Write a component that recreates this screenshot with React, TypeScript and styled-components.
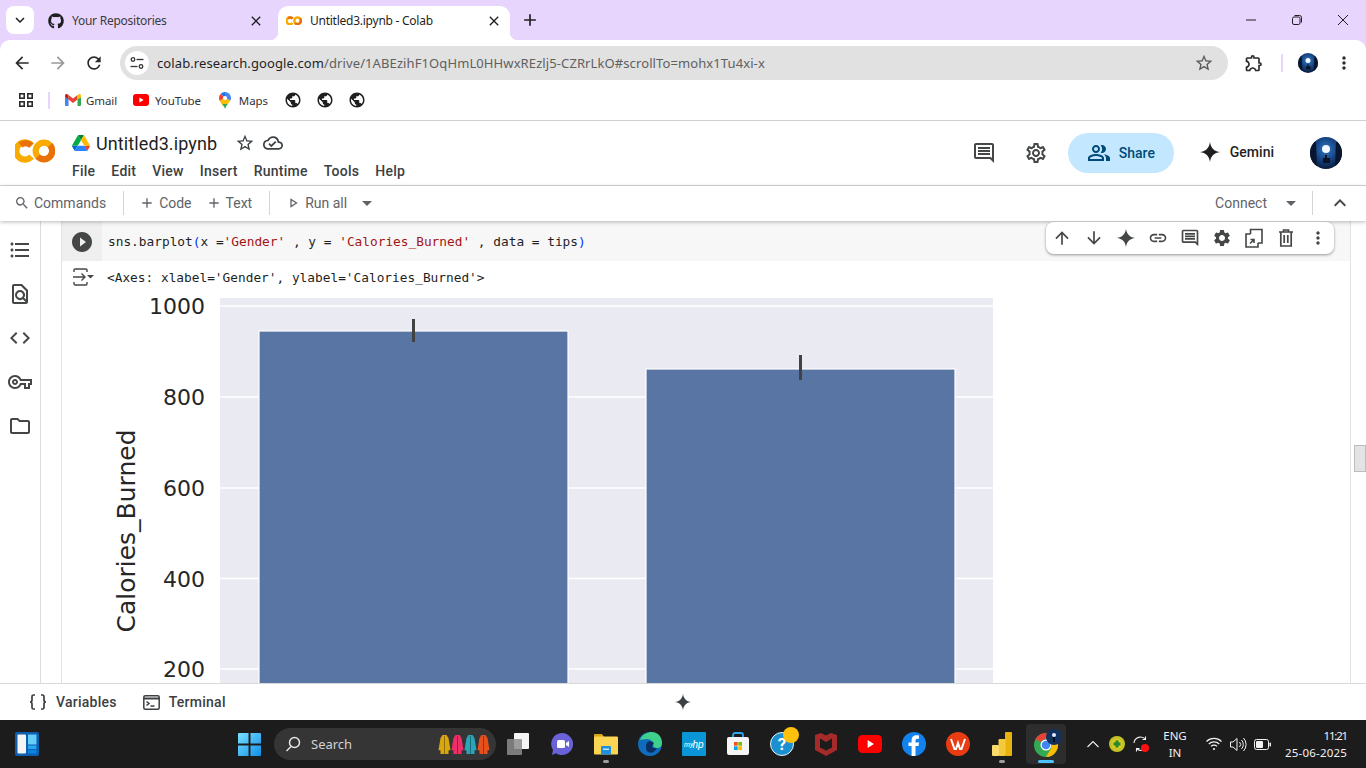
import React, { ReactElement } from "react";
import styled, { createGlobalStyle } from "styled-components";
import { FaGithub } from "react-icons/fa";
import {
    MdAdd,
    MdArrowBack,
    MdArrowDownward,
    MdArrowDropDown,
    MdArrowForward,
    MdArrowUpward,
    MdClose,
    MdCode,
    MdExpandLess,
    MdExpandMore,
    MdFormatListBulleted,
    MdLink,
    MdMoreVert,
    MdOutlineCloudDone,
    MdOutlineComment,
    MdOutlineExtension,
    MdOutlineFindInPage,
    MdOutlineFolder,
    MdOutlinePeopleAlt,
    MdOutlineSettings,
    MdOutlineVpnKey,
    MdPlayCircleFilled,
    MdPublic,
    MdRefresh,
    MdSearch,
    MdSettings,
    MdStarBorder,
} from "react-icons/md";

const GlobalStyle = createGlobalStyle`
    html, body {
        margin: 0;
        padding: 0;
        width: 1366px;
        height: 768px;
        overflow: hidden;
        background: #ffffff;
        font-family: "Noto Sans", sans-serif;
    }
    * {
        box-sizing: border-box;
    }
`;

const UI_FONT = `"Noto Sans", "Open Sans", sans-serif`;
const COLAB_FONT = `Roboto, "Noto Sans", sans-serif`;
const MONO_FONT = `"DejaVu Sans Mono", "Liberation Mono", monospace`;

const Page = styled.div`
    width: 1366px;
    height: 768px;
    display: flex;
    flex-direction: column;
    overflow: hidden;
`;

/* browser chrome */
const BrowserTop = styled.div`
    background: #e8d5fd;
    flex: 0 0 auto;
`;

const TabStrip = styled.div`
    height: 40px;
    padding: 6px 0 0 6px;
    display: flex;
    align-items: flex-start;
`;

const TabListButton = styled.div`
    width: 28px;
    height: 28px;
    margin-right: 6px;
    background: #ffffff;
    border-radius: 8px;
    display: flex;
    align-items: center;
    justify-content: center;
    color: #1f1f1f;
    font-size: 18px;
`;

const Tab = styled.div<{ $active?: boolean }>`
    position: relative;
    width: 232px;
    margin-right: ${(p) => (p.$active ? "0" : "6px")};
    height: 34px;
    padding: 0 8px;
    padding-bottom: 5px;
    display: flex;
    align-items: center;
    gap: 8px;
    font-family: ${UI_FONT};
    font-size: 12px;
    letter-spacing: -0.25px;
    color: #3b3b3b;
    background: ${(p) => (p.$active ? "#ffffff" : "transparent")};
    border-radius: 10px 10px 0 0;
    & > svg {
        flex: 0 0 16px;
    }
    ${(p) =>
        p.$active &&
        `
        color: #1f1f1f;
        &::before, &::after {
            content: "";
            position: absolute;
            bottom: 0;
            width: 8px;
            height: 8px;
        }
        &::before {
            left: -8px;
            background: radial-gradient(circle at 0 0, transparent 8px, #ffffff 8.5px);
        }
        &::after {
            right: -8px;
            background: radial-gradient(circle at 100% 0, transparent 8px, #ffffff 8.5px);
        }
    `}
`;

const TabTitle = styled.span`
    flex: 1;
    white-space: nowrap;
`;

const TabClose = styled.span`
    width: 16px;
    height: 16px;
    display: flex;
    align-items: center;
    justify-content: center;
    font-size: 16px;
    color: #1f1f1f;
`;

const NewTab = styled.div`
    width: 24px;
    height: 28px;
    margin-left: 8px;
    display: flex;
    align-items: center;
    justify-content: center;
    font-size: 20px;
    color: #1f1f1f;
`;

const WindowControls = styled.div`
    margin-left: auto;
    margin-top: -6px;
    display: flex;
`;

const WindowButton = styled.div`
    width: 46px;
    height: 40px;
    display: flex;
    align-items: center;
    justify-content: center;
`;

const AddressRow = styled.div`
    height: 44px;
    background: #ffffff;
    border-radius: 10px 10px 0 0;
    padding: 2px 0 0 4px;
    display: flex;
    align-items: center;
`;

const NavButton = styled.div<{ $dim?: boolean; $w?: number; $ml?: number }>`
    width: ${(p) => p.$w ?? 36}px;
    margin-left: ${(p) => p.$ml ?? 0}px;
    height: 34px;
    display: flex;
    align-items: center;
    justify-content: center;
    font-size: 20px;
    color: ${(p) => (p.$dim ? "#9a9a9a" : "#2b2b2b")};
`;

const Omnibox = styled.div`
    width: 1108px;
    height: 34px;
    margin-left: 8px;
    margin-right: 8px;
    padding: 0 14px 0 5px;
    border-radius: 17px;
    background: #e1e1e1;
    display: flex;
    align-items: center;
`;

const SiteChip = styled.div`
    width: 24px;
    height: 24px;
    border-radius: 50%;
    background: #ffffff;
    display: flex;
    align-items: center;
    justify-content: center;
    margin-right: 8px;
`;

const UrlText = styled.div`
    flex: 1;
    font-family: ${UI_FONT};
    font-size: 13px;
    letter-spacing: 0.1px;
    color: #5f6060;
    white-space: nowrap;
    & b {
        font-weight: 400;
        color: #1f1f1f;
    }
`;

const StarSlot = styled.div`
    width: 20px;
    display: flex;
    justify-content: center;
    font-size: 20px;
    color: #5a5a5a;
`;

const AddressSep = styled.div`
    width: 2px;
    height: 18px;
    margin: 0 15px 0 9px;
    background: #e8d5fd;
`;

const BookmarksRow = styled.div`
    height: 37px;
    background: #ffffff;
    border-bottom: 1px solid #cfcfcf;
    padding: 0 0 4px 18px;
    display: flex;
    align-items: center;
    font-family: ${UI_FONT};
    font-size: 11.5px;
    letter-spacing: -0.1px;
    color: #333;
`;

const BookmarkSep = styled.div`
    width: 2px;
    height: 17px;
    margin: 0 15px 0 14px;
    background: #e8d5fd;
`;

const Bookmark = styled.div<{ $gap?: number; $mr?: number }>`
    display: flex;
    align-items: center;
    gap: ${(p) => p.$gap ?? 6}px;
    margin-right: ${(p) => p.$mr ?? 16}px;
    white-space: nowrap;
`;

const GlobeRow = styled.div`
    display: flex;
    gap: 14px;
    margin-left: 0;
    font-size: 18px;
    color: #1f1f1f;
`;

/* colab header */
const ColabHeader = styled.div`
    height: 65px;
    flex: 0 0 auto;
    border-bottom: 1px solid #d9d9d9;
    padding: 0 24px 0 15px;
    display: flex;
    font-family: ${COLAB_FONT};
    background: #ffffff;
`;

const LogoSlot = styled.div`
    width: 57px;
    display: flex;
    align-items: center;
    padding-bottom: 4px;
`;

const TitleColumn = styled.div`
    display: flex;
    flex-direction: column;
`;

const TitleRow = styled.div`
    display: flex;
    align-items: center;
    height: 22px;
    margin-top: 11px;
    color: #3c4043;
`;

const NotebookName = styled.span`
    margin: 0 18px 0 6px;
    font-size: 18px;
    color: #1f1f1f;
    letter-spacing: 0.1px;
`;

const CloudSlot = styled.span`
    display: flex;
    margin-left: 8px;
`;

const MenuRow = styled.div`
    display: flex;
    gap: 16px;
    margin-top: 9px;
    font-size: 14px;
    font-weight: 500;
    letter-spacing: 0.25px;
    color: #3c4043;
`;

const HeaderActions = styled.div`
    margin-left: auto;
    display: flex;
    align-items: center;
`;

const HeaderIcon = styled.div`
    width: 52px;
    display: flex;
    justify-content: center;
    font-size: 24px;
    color: #444746;
`;

const ShareButton = styled.div`
    width: 106px;
    height: 40px;
    margin-left: 6px;
    border-radius: 20px;
    background: #c2e7ff;
    color: #004a77;
    font-size: 14px;
    font-weight: 500;
    display: flex;
    align-items: center;
    justify-content: center;
    gap: 8px;
`;

const GeminiButton = styled.div`
    margin-left: 25px;
    padding-bottom: 2px;
    display: flex;
    align-items: center;
    gap: 9px;
    font-size: 14px;
    font-weight: 500;
    color: #1f1f1f;
`;

const AvatarSlot = styled.div`
    margin-left: 36px;
    display: flex;
`;

const AvatarSvg = styled.svg`
    display: block;
    border-radius: 50%;
`;

/* notebook toolbar */
const NotebookBar = styled.div`
    position: relative;
    z-index: 2;
    height: 35px;
    flex: 0 0 auto;
    padding: 0 0 2px 14px;
    display: flex;
    align-items: center;
    background: #ffffff;
    box-shadow: 0 1px 4px rgba(0, 0, 0, 0.28);
    font-family: ${COLAB_FONT};
    font-size: 14px;
    color: #5f6368;
`;

const BarItem = styled.div<{ $gap?: number; $ml?: number }>`
    display: flex;
    align-items: center;
    gap: ${(p) => p.$gap ?? 4}px;
    margin-left: ${(p) => p.$ml ?? 0}px;
    white-space: nowrap;
    font-size: 14px;
    & svg {
        font-size: 16px;
    }
`;

const BarSep = styled.div<{ $ml: number; $mr: number }>`
    width: 1px;
    height: 24px;
    background: #d5d5d5;
    margin-left: ${(p) => p.$ml}px;
    margin-right: ${(p) => p.$mr}px;
`;

const BarCaret = styled.span<{ $ml: number; $mr?: number }>`
    display: flex;
    margin-left: ${(p) => p.$ml}px;
    margin-right: ${(p) => p.$mr ?? 0}px;
    font-size: 24px;
`;

const BarChevron = styled.span`
    display: flex;
    margin-right: 14px;
    font-size: 24px;
    color: #444746;
`;

const BarRight = styled.div`
    margin-left: auto;
    display: flex;
    align-items: center;
`;

/* notebook body */
const Main = styled.div`
    position: relative;
    height: 462px;
    flex: 0 0 auto;
    display: flex;
    background: #ffffff;
`;

const Sidebar = styled.div`
    width: 41px;
    padding-top: 17px;
    border-right: 1px solid #dadce0;
    display: flex;
    flex-direction: column;
    align-items: center;
    gap: 20px;
    font-size: 24px;
    color: #444746;
    & svg {
        display: block;
    }
`;

const Gutter = styled.div`
    width: 20px;
`;

const Cell = styled.div`
    width: 1290px;
    border-left: 1px solid #e3e3e3;
    border-right: 1px solid #e3e3e3;
    overflow: hidden;
`;

const CellHead = styled.div`
    height: 40px;
    display: flex;
    background: #f7f7f7;
`;

const RunSlot = styled.div`
    width: 40px;
    padding-top: 1px;
    background: #efefef;
    display: flex;
    align-items: center;
    justify-content: center;
    font-size: 24px;
    color: #444746;
`;

const CodeLine = styled.div`
    padding: 0 0 0 6px;
    line-height: 41px;
    font-family: ${MONO_FONT};
    font-size: 12.8px;
    color: #1f1f1f;
    white-space: pre;
`;

const Str = styled.span`
    color: #a31515;
`;

const Paren = styled.span`
    color: #0431fa;
`;

const OutputRow = styled.div`
    height: 29px;
    padding: 3px 0 0 10px;
    display: flex;
    align-items: center;
    font-family: ${MONO_FONT};
    font-size: 12.8px;
    color: #1f1f1f;
    white-space: pre;
    & svg {
        margin-right: 13px;
    }
`;

const ChartSvg = styled.svg`
    display: block;
    margin-left: 38px;
    font-family: "DejaVu Sans", sans-serif;
`;

const ScrollTrack = styled.div`
    width: 15px;
    padding: 224px 0 0 3px;
`;

const ScrollThumb = styled.div`
    height: 27px;
    background: #e3e3e3;
    border: 1px solid #bdbdbd;
`;

const CellToolbar = styled.div`
    position: absolute;
    top: 1px;
    left: 1046px;
    width: 288px;
    height: 32px;
    z-index: 3;
    display: flex;
    background: #ffffff;
    border-radius: 8px;
    box-shadow: 0 1px 3px rgba(0, 0, 0, 0.4);
`;

const CellTool = styled.div`
    width: 32px;
    display: flex;
    align-items: center;
    justify-content: center;
    font-size: 20px;
    color: #444746;
`;

/* bottom bar */
const BottomBar = styled.div`
    height: 37px;
    flex: 0 0 auto;
    border-top: 1px solid #d9d9d9;
    padding-left: 29px;
    display: flex;
    align-items: center;
    font-family: ${COLAB_FONT};
    font-size: 14px;
    font-weight: 500;
    letter-spacing: 0.25px;
    color: #3c4043;
    background: #ffffff;
`;

const BottomItem = styled.div`
    display: flex;
    align-items: center;
    gap: 9px;
    margin-right: 26px;
`;

const BottomGemini = styled.div`
    margin-left: 422px;
    display: flex;
`;

/* windows taskbar */
const Taskbar = styled.div`
    height: 48px;
    flex: 0 0 auto;
    background: #1c1c1c;
    display: flex;
    align-items: center;
    color: #ffffff;
    font-family: ${UI_FONT};
`;

const TaskSlot = styled.div<{ $w?: number; $active?: boolean; $ml?: number; $mr?: number }>`
    position: relative;
    width: ${(p) => p.$w ?? 44}px;
    height: 40px;
    margin-left: ${(p) => p.$ml ?? 0}px;
    margin-right: ${(p) => p.$mr ?? 0}px;
    flex: 0 0 auto;
    display: flex;
    align-items: center;
    justify-content: center;
    border-radius: 4px;
    background: ${(p) => (p.$active ? "#2d2d2d" : "transparent")};
`;

const RunningDot = styled.span<{ $active?: boolean }>`
    position: absolute;
    bottom: 1px;
    left: 50%;
    transform: translateX(-50%);
    width: ${(p) => (p.$active ? "16px" : "6px")};
    height: 3px;
    border-radius: 2px;
    background: ${(p) => (p.$active ? "#4cc2ff" : "#9d9d9d")};
`;

const WidgetSlot = styled.div`
    margin-left: 5px;
    margin-right: 178px;
`;

const SearchBox = styled.div`
    width: 222px;
    height: 32px;
    margin-left: 3px;
    padding: 0 6px 0 11px;
    border-radius: 16px;
    background: #353535;
    display: flex;
    align-items: center;
    gap: 10px;
    font-size: 13px;
    color: #d2d2d2;
`;

const SearchArt = styled.div`
    margin-left: auto;
    display: flex;
`;

const TrayLabel = styled.div`
    font-size: 11.5px;
    line-height: 17px;
    text-align: center;
    color: #f2f2f2;
`;

const Clock = styled.div`
    margin-left: auto;
    padding-right: 19px;
    font-size: 11.5px;
    line-height: 17px;
    letter-spacing: 0.2px;
    text-align: right;
    color: #f2f2f2;
`;

const ClockTime = styled.div`
    letter-spacing: -1.2px;
`;

const ColabLogo = ({ w }: { w: number }): ReactElement => (
    <svg width={w} height={(w * 24) / 40} viewBox="0 0 40 24">
        <path d="M16.5 6.5 A8.6 8.6 0 1 0 16.5 17.5" fill="none" stroke="#f9ab00" strokeWidth="6.2" />
        <path d="M5.5 6 A8.6 8.6 0 0 1 16.5 6.5" fill="none" stroke="#e8710a" strokeWidth="6.2" />
        <circle cx="29" cy="12" r="8.3" fill="none" stroke="#f9ab00" strokeWidth="6.2" />
        <path d="M35 6.2 A8.3 8.3 0 0 1 22.7 17.5" fill="none" stroke="#e8710a" strokeWidth="6.2" />
    </svg>
);

const DriveLogo = (): ReactElement => (
    <svg width="18" height="16" viewBox="0 0 87.3 78">
        <path d="m6.6 66.85 3.85 6.65c.8 1.4 1.95 2.5 3.3 3.3l13.75-23.8h-27.5c0 1.55.4 3.1 1.2 4.5z" fill="#0066da" />
        <path d="m43.65 25-13.75-23.8c-1.35.8-2.5 1.9-3.3 3.3l-25.4 44a9.06 9.06 0 0 0 -1.2 4.5h27.5z" fill="#00ac47" />
        <path d="m73.55 76.8c1.35-.8 2.5-1.9 3.3-3.3l1.6-2.75 7.65-13.25c.8-1.4 1.2-2.95 1.2-4.5h-27.502l5.852 11.5z" fill="#ea4335" />
        <path d="m43.65 25 13.75-23.8c-1.35-.8-2.9-1.2-4.5-1.2h-18.5c-1.6 0-3.15.45-4.5 1.2z" fill="#00832d" />
        <path d="m59.8 53h-32.3l-13.75 23.8c1.35.8 2.9 1.2 4.5 1.2h50.8c1.6 0 3.15-.45 4.5-1.2z" fill="#2684fc" />
        <path d="m73.4 26.5-12.7-22c-.8-1.4-1.95-2.5-3.3-3.3l-13.75 23.8 16.15 28h27.45c0-1.55-.4-3.1-1.2-4.5z" fill="#ffba00" />
    </svg>
);

const Sparkle = ({ size, color }: { size: number; color: string }): ReactElement => (
    <svg width={size} height={size} viewBox="0 0 24 24">
        <path d="M12 1C12.8 7.5 16.5 11.2 23 12C16.5 12.8 12.8 16.5 12 23C11.2 16.5 7.5 12.8 1 12C7.5 11.2 11.2 7.5 12 1Z" fill={color} />
    </svg>
);

const Avatar = ({ size, id }: { size: number; id: string }): ReactElement => (
    <AvatarSvg width={size} height={size} viewBox="0 0 32 32">
        <defs>
            <radialGradient id={id} cx="50%" cy="38%" r="62%">
                <stop offset="0" stopColor="#2f78c4" />
                <stop offset="0.6" stopColor="#15407f" />
                <stop offset="1" stopColor="#0a1a3a" />
            </radialGradient>
        </defs>
        <rect width="32" height="32" fill={`url(#${id})`} />
        <circle cx="16" cy="12" r="4" fill="#f4f8ff" />
        <path d="M13 26v-5h2v-3h2v3h3v5z" fill="#0b1220" />
        <path d="M0 4l6 1 1 24-7 3zM32 4l-6 1-1 24 7 3z" fill="#0a1630" />
    </AvatarSvg>
);

const SiteTune = (): ReactElement => (
    <svg width="14" height="14" viewBox="0 0 14 14" fill="none" stroke="#333" strokeWidth="1.300">
        <circle cx="3" cy="3.500" r="1.800" />
        <path d="M6.500 3.500H13.500" />
        <circle cx="11" cy="10.500" r="1.800" />
        <path d="M.5 10.500H7.500" />
    </svg>
);

const GmailIcon = (): ReactElement => (
    <svg width="16" height="12" viewBox="0 0 16 12">
        <path d="M0 3v8a1 1 0 0 0 1 1h2.500V5z" fill="#4285f4" />
        <path d="M16 3v8a1 1 0 0 1-1 1h-2.500V5z" fill="#34a853" />
        <path d="M3.500 5.500L8 9l4.500-3.500V1L8 4.400 3.500 1z" fill="#ea4335" />
        <path d="M0 3l3.500 2.600V1L2.200.2C1.200-.4 0 .3 0 1.600z" fill="#c5221f" />
        <path d="M16 3l-3.500 2.600V1l1.300-.8c1-.6 2.200.1 2.200 1.400z" fill="#fbbc04" />
    </svg>
);

const YoutubeIcon = ({ w }: { w: number }): ReactElement => (
    <svg width={w} height={(w * 12) / 16} viewBox="0 0 16 12">
        <rect width="16" height="12" rx="3" fill="#ff0000" />
        <path d="M6.400 3.400v5.200L10.600 6z" fill="#ffffff" />
    </svg>
);

const MapsIcon = (): ReactElement => (
    <svg width="12" height="17" viewBox="0 0 12 17">
        <path d="M6 0a6 6 0 0 1 6 6c0 1-.3 2-.7 2.700L6 5.500z" fill="#4285f4" />
        <path d="M6 0a6 6 0 0 0-4.400 1.900L6 5.500z" fill="#1a73e8" />
        <path d="M1.600 1.900A6 6 0 0 0 0 6c0 1 .3 2 .8 2.900L6 5.500z" fill="#ea4335" />
        <path d="M.8 8.900L6 5.500l5.300 3.200L8 13l-4.500.2z" fill="#fbbc04" />
        <path d="M3.500 12.600C4.600 14 5.600 15.500 6 17c.4-1.500 1.300-3 2.400-4.400L8.500 12 3.500 12z" fill="#34a853" />
        <circle cx="6" cy="6" r="2.100" fill="#ffffff" />
    </svg>
);

const Minimize = (): ReactElement => (
    <svg width="12" height="12" viewBox="0 0 12 12">
        <path d="M1 6h10" stroke="#1f1f1f" strokeWidth="1" />
    </svg>
);

const Restore = (): ReactElement => (
    <svg width="12" height="12" viewBox="0 0 12 12" fill="none" stroke="#1f1f1f">
        <rect x="1.500" y="3" width="7.500" height="7.500" rx="1.500" />
        <path d="M3.500 1.500h5a2 2 0 0 1 2 2v5" />
    </svg>
);

const CloseThin = (): ReactElement => (
    <svg width="12" height="12" viewBox="0 0 12 12">
        <path d="M1 1l10 10M11 1L1 11" stroke="#1f1f1f" strokeWidth="1" />
    </svg>
);

const AppsIcon = (): ReactElement => (
    <svg width="16" height="16" viewBox="0 0 16 16" fill="none" stroke="#2b2b2b" strokeWidth="1.600">
        <rect x="1.800" y="1.800" width="4.400" height="4.400" />
        <rect x="9.800" y="1.800" width="4.400" height="4.400" />
        <rect x="1.800" y="9.800" width="4.400" height="4.400" />
        <rect x="9.800" y="9.800" width="4.400" height="4.400" />
    </svg>
);

const OutputToggle = (): ReactElement => (
    <svg width="22" height="18" viewBox="0 0 22 18" fill="none" stroke="#444746" strokeWidth="1.400">
        <path d="M2 4V2.200A1.200 1.200 0 0 1 3.200 1h10.600A1.200 1.200 0 0 1 15 2.200V4" />
        <path d="M2 14v1.800A1.200 1.200 0 0 0 3.200 17h10.600a1.200 1.200 0 0 0 1.200-1.200V14" />
        <path d="M1 9h12M9.500 5.500L13 9l-3.500 3.500" />
        <path d="M15 7h7l-3.500 3.500z" fill="#444746" stroke="none" />
    </svg>
);

const MirrorIcon = (): ReactElement => (
    <svg width="20" height="20" viewBox="0 0 20 20" fill="none" stroke="#444746" strokeWidth="1.600">
        <path d="M6.500 6V1.500H18v13.500h-4" />
        <path d="M6.500 6H2v13h12v-4" />
        <path d="M6 15.500l4-4M6.500 11.500H10V15" />
    </svg>
);

const TrashIcon = (): ReactElement => (
    <svg width="20" height="20" viewBox="0 0 20 20" fill="none" stroke="#444746" strokeWidth="1.700">
        <path d="M3 4h14M7.500 3.500V2h5v1.500" />
        <path d="M4.800 4v14h10.400V4" />
        <path d="M8.200 7v8M11.800 7v8" />
    </svg>
);

const VariablesIcon = (): ReactElement => (
    <svg width="18" height="16" viewBox="0 0 18 16" fill="none" stroke="#3c4043" strokeWidth="1.700">
        <path d="M6 1H4.500A1.500 1.500 0 0 0 3 2.500V6c0 1-.7 2-2 2 1.300 0 2 1 2 2v3.500A1.500 1.500 0 0 0 4.500 15H6" />
        <path d="M12 1h1.500A1.500 1.500 0 0 1 15 2.500V6c0 1 .7 2 2 2-1.300 0-2 1-2 2v3.500a1.500 1.500 0 0 1-1.500 1.500H12" />
    </svg>
);

const TerminalIcon = (): ReactElement => (
    <svg width="17" height="15" viewBox="0 0 17 15" fill="none" stroke="#3c4043" strokeWidth="1.500">
        <rect x="0.800" y="0.800" width="15.400" height="13.400" rx="1.500" />
        <path d="M0.800 3.500h15.400" strokeWidth="2" />
        <path d="M3.500 6.500L6 8.500 3.500 10.500M7.500 11h4" />
    </svg>
);

const RunAllIcon = (): ReactElement => (
    <svg width="16" height="16" viewBox="0 0 16 16">
        <path d="M5 4.500v7L10.500 8z" fill="none" stroke="#5f6368" strokeWidth="1.300" />
    </svg>
);

const WidgetsIcon = (): ReactElement => (
    <svg width="24" height="24" viewBox="0 0 24 24">
        <rect width="24" height="24" rx="2" fill="#0f5fb0" />
        <rect x="2.500" y="2.500" width="8.500" height="19" rx="1" fill="#f4f4f4" />
        <rect x="13" y="2.500" width="8.500" height="10" fill="#66cdf6" />
        <rect x="13" y="13.500" width="8.500" height="3.500" fill="#27a8f0" />
        <rect x="13" y="18" width="8.500" height="3.500" fill="#0a84e0" />
    </svg>
);

const StartIcon = (): ReactElement => (
    <svg width="23" height="23" viewBox="0 0 24 24">
        <defs>
            <linearGradient id="win" x1="0" y1="0" x2="1" y2="1">
                <stop offset="0" stopColor="#7be0ff" />
                <stop offset="1" stopColor="#0f8fe8" />
            </linearGradient>
        </defs>
        <path d="M0 1a1 1 0 0 1 1-1h10v11H0zM13 0h10a1 1 0 0 1 1 1v10H13zM0 13h11v11H1a1 1 0 0 1-1-1zM13 13h11v10a1 1 0 0 1-1 1H13z" fill="url(#win)" />
    </svg>
);

const SearchGlass = (): ReactElement => (
    <svg width="16" height="16" viewBox="0 0 16 16" fill="none" stroke="#e6e6e6" strokeWidth="1.500">
        <circle cx="9.500" cy="6.500" r="5" />
        <path d="M6 10.500L1.500 15" />
    </svg>
);

const Coat = ({ color }: { color: string }): ReactElement => (
    <svg width="13" height="21" viewBox="0 0 13 21">
        <path d="M4.500 1h4l2 3 2 12-2 .5V20h-8v-3.500L.5 16l2-12z" fill={color} />
        <path d="M6.500 2v18" stroke="#00000055" />
    </svg>
);

const TaskViewIcon = (): ReactElement => (
    <svg width="24" height="24" viewBox="0 0 24 24">
        <rect x="8" y="1" width="15" height="16" rx="1" fill="#f4f4f4" />
        <rect x="1" y="7" width="15" height="16" rx="1" fill="#8c8c8c" fillOpacity="0.85" />
    </svg>
);

const MeetIcon = (): ReactElement => (
    <svg width="24" height="24" viewBox="0 0 24 24">
        <path d="M12 1a11 11 0 1 1-6 20.200L2 23l1-5A11 11 0 0 1 12 1z" fill="#6a62d9" />
        <rect x="7" y="8" width="8" height="8" rx="1.500" fill="#ffffff" />
        <path d="M16 11l3-2v6l-3-2z" fill="#ffffff" />
    </svg>
);

const FolderIcon = (): ReactElement => (
    <svg width="24" height="22" viewBox="0 0 24 22">
        <path d="M0 2a1 1 0 0 1 1-1h7l2 3H0z" fill="#d9a514" />
        <rect y="3.500" width="24" height="18" rx="1" fill="#fcd652" />
        <rect x="7" y="13" width="10" height="8.500" rx="1" fill="#1f90dd" />
        <rect x="9" y="15.500" width="6" height="1.500" fill="#bfe3fa" />
    </svg>
);

const EdgeIcon = (): ReactElement => (
    <svg width="24" height="24" viewBox="0 0 24 24">
        <circle cx="12" cy="12" r="12" fill="#0f6cbd" />
        <path d="M2 8C4 2 10 0 14 0c6 0 10 5 10 11 0 3-2 5-5 5-2 0-4-1-4-3 0-3-2-6-6-6-3 0-5 1-7 1z" fill="#3fd08c" />
        <path d="M8 14c0-4 3-6 7-4 1 1 1 2 0 3-2 2 0 4 4 3-2 5-8 6-10 3-1-1-1-3-1-5z" fill="#0b2f63" />
    </svg>
);

const MyHpIcon = (): ReactElement => (
    <svg width="24" height="24" viewBox="0 0 24 24">
        <rect width="24" height="24" rx="1" fill="#0a96d6" />
        <text x="2" y="15" fontSize="7" fontStyle="italic" fill="#ffffff" fontFamily="Roboto, sans-serif">my</text>
        <text x="10.500" y="15.500" fontSize="10.500" fontStyle="italic" fill="#ffffff" fontFamily="Roboto, sans-serif">hp</text>
    </svg>
);

const StoreIcon = (): ReactElement => (
    <svg width="24" height="24" viewBox="0 0 24 24">
        <path d="M7 6V3a2 2 0 0 1 2-2h6a2 2 0 0 1 2 2v3" fill="none" stroke="#2aa9ef" strokeWidth="1.800" />
        <rect x="1" y="5" width="22" height="18" rx="2" fill="#f5f5f5" />
        <rect x="8" y="10" width="3.700" height="3.700" fill="#f25022" />
        <rect x="12.300" y="10" width="3.700" height="3.700" fill="#7fba00" />
        <rect x="8" y="14.300" width="3.700" height="3.700" fill="#00a4ef" />
        <rect x="12.300" y="14.300" width="3.700" height="3.700" fill="#ffb900" />
    </svg>
);

const HelpIcon = (): ReactElement => (
    <svg width="30" height="30" viewBox="0 0 30 30" overflow="visible">
        <circle cx="15" cy="15" r="11.500" fill="#1b8fd0" stroke="#e8f3f8" strokeWidth="1" />
        <text x="15" y="21" fontSize="17" fontWeight="700" textAnchor="middle" fill="#ffffff" fontFamily="Roboto, sans-serif">?</text>
        <circle cx="24" cy="6" r="8" fill="#fcc00d" />
    </svg>
);

const McafeeIcon = (): ReactElement => (
    <svg width="22" height="24" viewBox="0 0 22 24">
        <path d="M0 3l6-2 5 2.500L16 1l6 2v15l-11 6-11-6z" fill="#a52a2a" />
        <path d="M5 6.500v9l6 3 6-3v-9l-6 3.500z" fill="#1c1c1c" />
    </svg>
);

const FacebookIcon = (): ReactElement => (
    <svg width="24" height="24" viewBox="0 0 24 24">
        <circle cx="12" cy="12" r="12" fill="#1283ee" />
        <path d="M13.500 24V14h3l.6-3.500h-3.600V8.600c0-1.100.5-1.900 2-1.900H17V3.500c-.8-.1-1.700-.2-2.600-.2-2.900 0-4.800 1.700-4.800 4.800v2.400H6.500V14h3.100v10z" fill="#ffffff" />
    </svg>
);

const WpsIcon = (): ReactElement => (
    <svg width="24" height="24" viewBox="0 0 24 24">
        <circle cx="12" cy="12" r="12" fill="#ea3c12" />
        <path d="M5 7l3.500 10h1.500L12 11l2 6h1.500L19 7" fill="none" stroke="#ffffff" strokeWidth="2" />
    </svg>
);

const PowerBiIcon = (): ReactElement => (
    <svg width="20" height="24" viewBox="0 0 20 24">
        <rect x="13" y="0" width="7" height="24" rx="1" fill="#e8b30f" />
        <rect x="6.500" y="7" width="7" height="17" rx="1" fill="#f4ca3d" />
        <rect x="0" y="13" width="7" height="11" rx="1" fill="#f9dc6c" />
    </svg>
);

const ChromeIcon = (): ReactElement => (
    <svg width="30" height="30" viewBox="-2 1 30 30">
        <circle cx="13" cy="17" r="12" fill="#34a853" />
        <path d="M13 5a12 12 0 0 1 10.400 6H13a6 6 0 0 0-5.200 3L2.600 11A12 12 0 0 1 13 5z" fill="#ea4335" />
        <path d="M23.400 11A12 12 0 0 1 13 29l5.200-9a6 6 0 0 0 0-6z" fill="#fbbc04" />
        <circle cx="13" cy="17" r="5.500" fill="#ffffff" />
        <circle cx="13" cy="17" r="4.300" fill="#4285f4" />
        <circle cx="21" cy="9" r="8" fill="#12315f" />
        <circle cx="21" cy="7" r="2" fill="#dfeaff" />
        <rect x="20" y="9" width="2" height="5" fill="#05101f" />
    </svg>
);

const TrayChevron = (): ReactElement => (
    <svg width="14" height="14" viewBox="0 0 14 14" fill="none" stroke="#f2f2f2" strokeWidth="1.100">
        <path d="M1.500 10L7 4.500 12.500 10" />
    </svg>
);

const GreenTray = (): ReactElement => (
    <svg width="16" height="16" viewBox="0 0 16 16">
        <circle cx="8" cy="8" r="8" fill="#c3c423" />
        <circle cx="8" cy="8" r="5" fill="#e5c625" />
        <path d="M6.500 4.500h3v2h2v3h-2v2h-3v-2h-2v-3h2z" fill="#1f8a2e" />
    </svg>
);

const SyncTray = (): ReactElement => (
    <svg width="18" height="18" viewBox="0 0 18 18" fill="none" stroke="#f2f2f2" strokeWidth="1.100">
        <path d="M2 8a6.500 6.500 0 0 1 11.500-3.500M13.500 1.500v3h-3" />
        <path d="M15.500 10a6.500 6.500 0 0 1-11 3.500M4.500 16.500v-3h3" />
        <circle cx="13" cy="13" r="4" fill="#ff1010" stroke="none" />
    </svg>
);

const WifiIcon = (): ReactElement => (
    <svg width="16" height="14" viewBox="0 0 16 14" fill="none" stroke="#f2f2f2" strokeWidth="1.200">
        <path d="M.5 4.500a10.500 10.500 0 0 1 15 0M2.800 7a7.300 7.300 0 0 1 10.400 0M5 9.300a4.200 4.200 0 0 1 6 0" />
        <circle cx="8" cy="12" r="1.100" fill="#f2f2f2" stroke="none" />
    </svg>
);

const VolumeIcon = (): ReactElement => (
    <svg width="17" height="15" viewBox="0 0 17 15" fill="none" stroke="#f2f2f2" strokeWidth="1">
        <path d="M.5 5v5h2.500L7 13.500v-12L3 5z" />
        <path d="M9.500 5a3.500 3.500 0 0 1 0 5M11.500 3a6.500 6.500 0 0 1 0 9M13.500 1a9.500 9.500 0 0 1 0 13" />
    </svg>
);

const BatteryIcon = (): ReactElement => (
    <svg width="17" height="11" viewBox="0 0 17 11">
        <rect x="0.500" y="0.500" width="14" height="10" rx="2" fill="none" stroke="#f2f2f2" />
        <rect x="2" y="2" width="7" height="7" rx="1" fill="#f2f2f2" />
        <rect x="15.500" y="3.500" width="1.500" height="4" rx="0.700" fill="#f2f2f2" />
    </svg>
);

const gridLines = [306, 397, 488, 578.5, 669];
const ticks = [
    { y: 306, label: "1000" },
    { y: 397, label: "800" },
    { y: 488, label: "600" },
    { y: 578.5, label: "400" },
    { y: 669, label: "200" },
];
const bars = [
    { x: 259, top: 331, err: [319, 342], ex: 413.5 },
    { x: 646, top: 369, err: [355, 380], ex: 800.5 },
];

const Chart = (): ReactElement => (
    <ChartSvg width="900" height="400" viewBox="100 290 900 400">
        <rect x="220" y="298" width="773" height="392" fill="#eaeaf2" />
        {gridLines.map((y) => (
            <line key={y} x1="220" x2="993" y1={y} y2={y} stroke="#ffffff" strokeWidth="1.500" />
        ))}
        {bars.map((b) => (
            <g key={b.x}>
                <rect x={b.x} y={b.top} width="309" height="400" fill="#5975a4" stroke="#ffffff" strokeWidth="1.200" />
                <line x1={b.ex} x2={b.ex} y1={b.err[0]} y2={b.err[1]} stroke="#424242" strokeWidth="3" />
            </g>
        ))}
        {ticks.map((t) => (
            <text key={t.label} x="205" y={t.y + 8} textAnchor="end" fontSize="22" fill="#262626">
                {t.label}
            </text>
        ))}
        <text transform="translate(135 531) rotate(-90)" textAnchor="middle" fontSize="25" fill="#262626">
            Calories_Burned
        </text>
    </ChartSvg>
);

const App = (): ReactElement => (
    <Page>
        <GlobalStyle />
        <BrowserTop>
            <TabStrip>
                <TabListButton>
                    <MdExpandMore />
                </TabListButton>
                <Tab>
                    <FaGithub size={16} color="#1f1f1f" />
                    <TabTitle>Your Repositories</TabTitle>
                    <TabClose>
                        <MdClose />
                    </TabClose>
                </Tab>
                <Tab $active>
                    <ColabLogo w={16} />
                    <TabTitle>Untitled3.ipynb - Colab</TabTitle>
                    <TabClose>
                        <MdClose />
                    </TabClose>
                </Tab>
                <NewTab>
                    <MdAdd />
                </NewTab>
                <WindowControls>
                    <WindowButton>
                        <Minimize />
                    </WindowButton>
                    <WindowButton>
                        <Restore />
                    </WindowButton>
                    <WindowButton>
                        <CloseThin />
                    </WindowButton>
                </WindowControls>
            </TabStrip>
            <AddressRow>
                <NavButton>
                    <MdArrowBack />
                </NavButton>
                <NavButton $dim>
                    <MdArrowForward />
                </NavButton>
                <NavButton>
                    <MdRefresh />
                </NavButton>
                <Omnibox>
                    <SiteChip>
                        <SiteTune />
                    </SiteChip>
                    <UrlText>
                        <b>colab.research.google.com</b>/drive/1ABEzihF1OqHmL0HHwxREzlj5-CZRrLkO#scrollTo=mohx1Tu4xi-x
                    </UrlText>
                    <StarSlot>
                        <MdStarBorder />
                    </StarSlot>
                </Omnibox>
                <NavButton>
                    <MdOutlineExtension />
                </NavButton>
                <AddressSep />
                <Avatar size={20} id="chrome-avatar" />
                <NavButton $ml={8}>
                    <MdMoreVert />
                </NavButton>
            </AddressRow>
            <BookmarksRow>
                <AppsIcon />
                <BookmarkSep />
                <Bookmark $gap={5}>
                    <GmailIcon />
                    Gmail
                </Bookmark>
                <Bookmark $mr={18}>
                    <YoutubeIcon w={16} />
                    YouTube
                </Bookmark>
                <Bookmark $gap={8} $mr={16}>
                    <MapsIcon />
                    Maps
                </Bookmark>
                <GlobeRow>
                    <MdPublic />
                    <MdPublic />
                    <MdPublic />
                </GlobeRow>
            </BookmarksRow>
        </BrowserTop>

        <ColabHeader>
            <LogoSlot>
                <ColabLogo w={40} />
            </LogoSlot>
            <TitleColumn>
                <TitleRow>
                    <DriveLogo />
                    <NotebookName>Untitled3.ipynb</NotebookName>
                    <MdStarBorder size={20} />
                    <CloudSlot>
                        <MdOutlineCloudDone size={20} />
                    </CloudSlot>
                </TitleRow>
                <MenuRow>
                    <span>File</span>
                    <span>Edit</span>
                    <span>View</span>
                    <span>Insert</span>
                    <span>Runtime</span>
                    <span>Tools</span>
                    <span>Help</span>
                </MenuRow>
            </TitleColumn>
            <HeaderActions>
                <HeaderIcon>
                    <MdOutlineComment />
                </HeaderIcon>
                <HeaderIcon>
                    <MdOutlineSettings />
                </HeaderIcon>
                <ShareButton>
                    <MdOutlinePeopleAlt size={24} />
                    Share
                </ShareButton>
                <GeminiButton>
                    <Sparkle size={22} color="#1f1f1f" />
                    Gemini
                </GeminiButton>
                <AvatarSlot>
                    <Avatar size={32} id="colab-avatar" />
                </AvatarSlot>
            </HeaderActions>
        </ColabHeader>

        <NotebookBar>
            <BarItem>
                <MdSearch />
                Commands
            </BarItem>
            <BarSep $ml={17} $mr={15} />
            <BarItem>
                <MdAdd />
                Code
            </BarItem>
            <BarItem $ml={14}>
                <MdAdd />
                Text
            </BarItem>
            <BarSep $ml={17} $mr={16} />
            <BarItem $gap={3}>
                <RunAllIcon />
                Run all
            </BarItem>
            <BarCaret $ml={8}>
                <MdArrowDropDown />
            </BarCaret>
            <BarRight>
                <span>Connect</span>
                <BarCaret $ml={12} $mr={1}>
                    <MdArrowDropDown />
                </BarCaret>
                <BarSep $ml={8} $mr={15} />
                <BarChevron>
                    <MdExpandLess />
                </BarChevron>
            </BarRight>
        </NotebookBar>

        <Main>
            <Sidebar>
                <MdFormatListBulleted />
                <MdOutlineFindInPage />
                <MdCode />
                <MdOutlineVpnKey />
                <MdOutlineFolder />
            </Sidebar>
            <Gutter />
            <Cell>
                <CellHead>
                    <RunSlot>
                        <MdPlayCircleFilled />
                    </RunSlot>
                    <CodeLine>
                        sns.barplot<Paren>(</Paren>x =<Str>'Gender'</Str> , y = <Str>'Calories_Burned'</Str> , data = tips<Paren>)</Paren>
                    </CodeLine>
                </CellHead>
                <OutputRow>
                    <OutputToggle />
                    {"<Axes: xlabel='Gender', ylabel='Calories_Burned'>"}
                </OutputRow>
                <Chart />
            </Cell>
            <ScrollTrack>
                <ScrollThumb />
            </ScrollTrack>
            <CellToolbar>
                <CellTool>
                    <MdArrowUpward />
                </CellTool>
                <CellTool>
                    <MdArrowDownward />
                </CellTool>
                <CellTool>
                    <Sparkle size={20} color="#444746" />
                </CellTool>
                <CellTool>
                    <MdLink />
                </CellTool>
                <CellTool>
                    <MdOutlineComment />
                </CellTool>
                <CellTool>
                    <MdSettings />
                </CellTool>
                <CellTool>
                    <MirrorIcon />
                </CellTool>
                <CellTool>
                    <TrashIcon />
                </CellTool>
                <CellTool>
                    <MdMoreVert />
                </CellTool>
            </CellToolbar>
        </Main>

        <BottomBar>
            <BottomItem>
                <VariablesIcon />
                Variables
            </BottomItem>
            <BottomItem>
                <TerminalIcon />
                Terminal
            </BottomItem>
            <BottomGemini>
                <Sparkle size={18} color="#3c4043" />
            </BottomGemini>
        </BottomBar>

        <Taskbar>
            <WidgetSlot>
                <TaskSlot>
                    <WidgetsIcon />
                </TaskSlot>
            </WidgetSlot>
            <TaskSlot>
                <StartIcon />
            </TaskSlot>
            <SearchBox>
                <SearchGlass />
                Search
                <SearchArt>
                    <Coat color="#d9a60e" />
                    <Coat color="#ec2f66" />
                    <Coat color="#2aa4b8" />
                    <Coat color="#e5501d" />
                </SearchArt>
            </SearchBox>
            <TaskSlot>
                <TaskViewIcon />
            </TaskSlot>
            <TaskSlot>
                <MeetIcon />
            </TaskSlot>
            <TaskSlot>
                <FolderIcon />
                <RunningDot />
            </TaskSlot>
            <TaskSlot>
                <EdgeIcon />
            </TaskSlot>
            <TaskSlot>
                <MyHpIcon />
            </TaskSlot>
            <TaskSlot>
                <StoreIcon />
            </TaskSlot>
            <TaskSlot>
                <HelpIcon />
            </TaskSlot>
            <TaskSlot>
                <McafeeIcon />
            </TaskSlot>
            <TaskSlot>
                <YoutubeIcon w={24} />
            </TaskSlot>
            <TaskSlot>
                <FacebookIcon />
            </TaskSlot>
            <TaskSlot>
                <WpsIcon />
            </TaskSlot>
            <TaskSlot>
                <PowerBiIcon />
                <RunningDot />
            </TaskSlot>
            <TaskSlot $w={40} $ml={2} $mr={2} $active>
                <ChromeIcon />
                <RunningDot $active />
            </TaskSlot>
            <TaskSlot $w={24} $ml={13}>
                <TrayChevron />
            </TaskSlot>
            <TaskSlot $w={24}>
                <GreenTray />
            </TaskSlot>
            <TaskSlot $w={24}>
                <SyncTray />
            </TaskSlot>
            <TaskSlot $w={44}>
                <TrayLabel>
                    ENG
                    <br />
                    IN
                </TrayLabel>
            </TaskSlot>
            <TaskSlot $w={24} $ml={5}>
                <WifiIcon />
            </TaskSlot>
            <TaskSlot $w={24}>
                <VolumeIcon />
            </TaskSlot>
            <TaskSlot $w={24}>
                <BatteryIcon />
            </TaskSlot>
            <Clock>
                <ClockTime>11:21</ClockTime>
                25-06-2025
            </Clock>
        </Taskbar>
    </Page>
);

export default App;
